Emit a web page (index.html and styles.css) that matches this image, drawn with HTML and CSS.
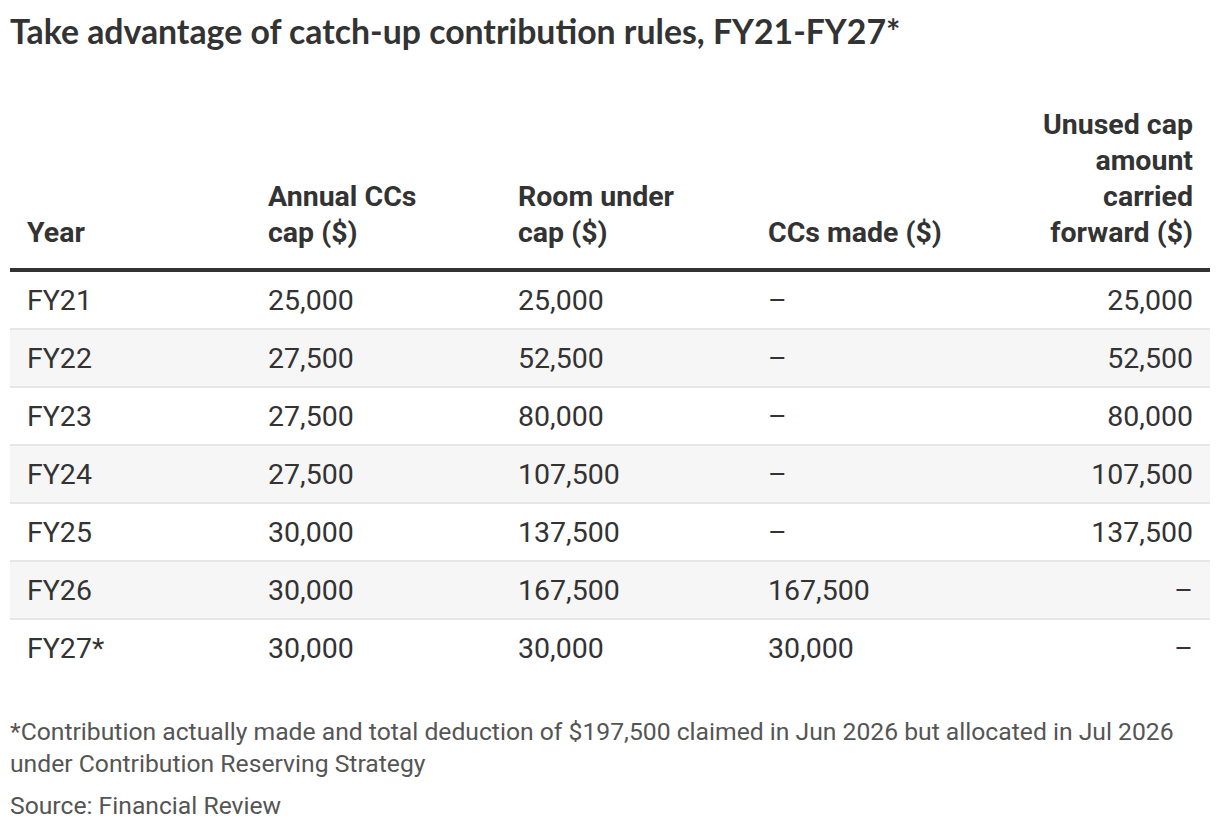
FILE: index.html
```html
<!DOCTYPE html>
<html lang="en">
<head>
<meta charset="utf-8">
<title>Catch-up contribution rules</title>
<link rel="stylesheet" href="styles.css">
</head>
<body>
<div class="chart">
  <h1 class="title">Take advantage of catch-up contribution rules, FY21-FY27*</h1>
  <table class="data">
    <thead>
      <tr>
        <th class="c1">Year</th>
        <th class="c2">Annual CCs<br>cap ($)</th>
        <th class="c3">Room under<br>cap ($)</th>
        <th class="c4">CCs made ($)</th>
        <th class="c5">Unused cap<br>amount<br>carried<br>forward ($)</th>
      </tr>
    </thead>
    <tbody>
      <tr><td class="c1">FY21</td><td class="c2">25,000</td><td class="c3">25,000</td><td class="c4">–</td><td class="c5">25,000</td></tr>
      <tr class="alt"><td class="c1">FY22</td><td class="c2">27,500</td><td class="c3">52,500</td><td class="c4">–</td><td class="c5">52,500</td></tr>
      <tr><td class="c1">FY23</td><td class="c2">27,500</td><td class="c3">80,000</td><td class="c4">–</td><td class="c5">80,000</td></tr>
      <tr class="alt"><td class="c1">FY24</td><td class="c2">27,500</td><td class="c3">107,500</td><td class="c4">–</td><td class="c5">107,500</td></tr>
      <tr><td class="c1">FY25</td><td class="c2">30,000</td><td class="c3">137,500</td><td class="c4">–</td><td class="c5">137,500</td></tr>
      <tr class="alt"><td class="c1">FY26</td><td class="c2">30,000</td><td class="c3">167,500</td><td class="c4">167,500</td><td class="c5">–</td></tr>
      <tr><td class="c1">FY27*</td><td class="c2">30,000</td><td class="c3">30,000</td><td class="c4">30,000</td><td class="c5">–</td></tr>
    </tbody>
  </table>
  <p class="note">*Contribution actually made and total deduction of $197,500 claimed in Jun 2026 but allocated in Jul 2026 under Contribution Reserving Strategy</p>
  <p class="source">Source: Financial Review</p>
</div>
</body>
</html>
```
FILE: styles.css
```css
html, body {
  margin: 0;
  padding: 0;
  background: #ffffff;
}

.chart {
  padding: 9px 10px 0 10px;
  font-family: Roboto, "Liberation Sans", sans-serif;
  color: #333333;
}

.title {
  margin: 0;
  font-family: Lato, "Open Sans", sans-serif;
  font-weight: 700;
  font-size: 33.8px;
  line-height: 44px;
  color: #333333;
}

.data {
  margin-top: 54px;
  width: 1200px;
  border-collapse: collapse;
  table-layout: fixed;
}

.data th {
  font-weight: 700;
  font-size: 28.5px;
  line-height: 36px;
  text-align: left;
  vertical-align: bottom;
  padding: 0 0 17px 0;
  border-bottom: 4px solid #333333;
}

.data td {
  font-size: 28.5px;
  height: 56px;
  padding: 0;
  vertical-align: middle;
  border-bottom: 2px solid #e6e6e6;
}

.data tbody tr:last-child td {
  border-bottom: none;
}

.data tr.alt td {
  background: #f6f6f6;
}

.c1 { width: 241px; padding-left: 17px !important; }
.c2 { width: 250px; }
.c3 { width: 250px; }
.c4 { width: 250px; }
.data .c5 { text-align: right; padding-right: 17px !important; }

.note {
  margin: 40px 0 0 0;
  font-size: 24.7px;
  line-height: 32px;
  color: #555555;
}

.source {
  margin: 10px 0 0 0;
  font-size: 24.7px;
  line-height: 32px;
  color: #555555;
}
```
